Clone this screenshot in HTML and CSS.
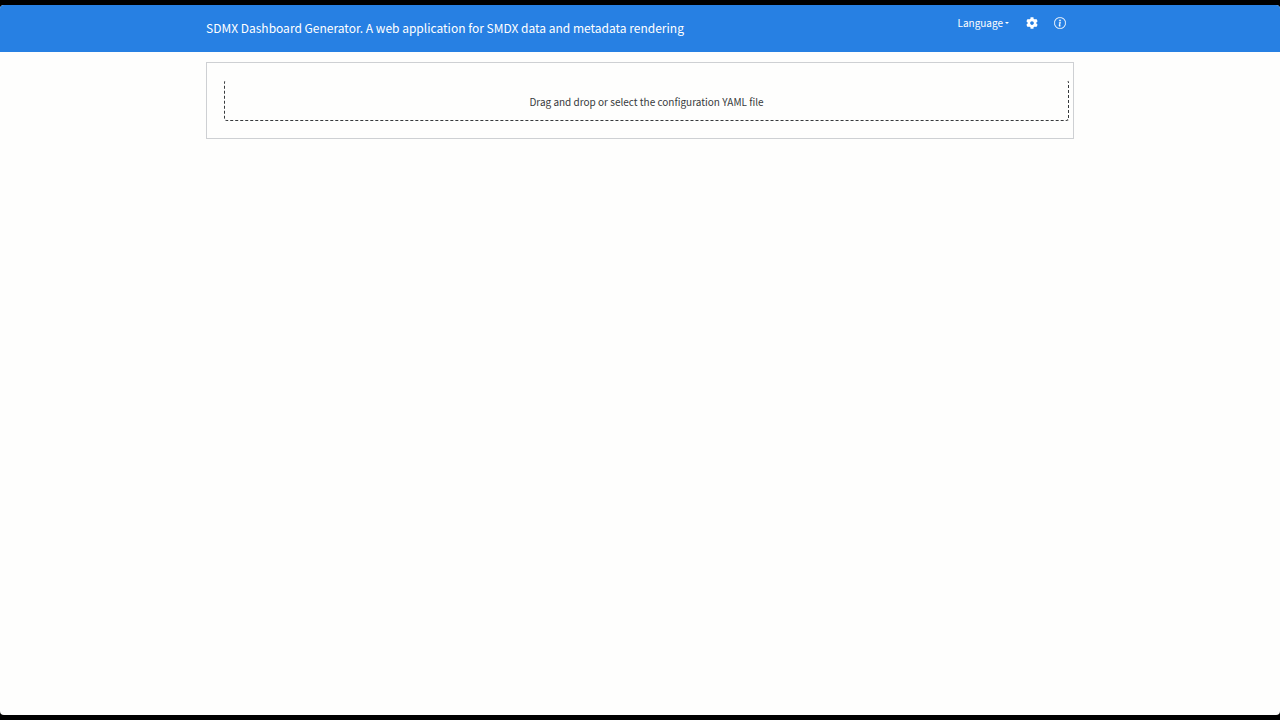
FILE: index.html
```html
<!DOCTYPE html>
<html lang="en">
<head>
<meta charset="utf-8">
<meta name="viewport" content="width=device-width, initial-scale=1">
<title>SDMX Dashboard Generator</title>
<link rel="stylesheet" href="styles.css">
</head>
<body>
<div class="window">
  <header class="navbar">
    <div class="container navbar-inner">
      <h1 class="brand">SDMX Dashboard Generator. A web application for SMDX data and metadata rendering</h1>
      <nav class="menu" aria-label="Main">
        <button type="button" class="menu-item language" aria-haspopup="true">Language<span class="caret"></span></button>
        <button type="button" class="menu-item" aria-label="Settings">
          <svg class="icon" viewBox="0 0 512 512" aria-hidden="true"><path fill="currentColor" d="M487.4 315.7l-42.6-24.6c4.3-23.2 4.3-47 0-70.2l42.6-24.6c4.9-2.8 7.1-8.6 5.5-14-11.1-35.6-30-67.8-54.7-94.6-3.8-4.1-10-5.1-14.8-2.3L380.8 110c-17.9-15.4-38.5-27.3-60.8-35.1V25.8c0-5.6-3.9-10.5-9.4-11.7-36.7-8.2-74.3-7.8-109.2 0-5.5 1.2-9.4 6.1-9.4 11.7V75c-22.2 7.9-42.8 19.8-60.8 35.1L88.700 85.500c-4.900-2.800-11-1.900-14.800 2.300-24.700 26.700-43.600 58.900-54.700 94.600-1.700 5.400.6 11.200 5.500 14L67.300 221c-4.300 23.200-4.300 47 0 70.200l-42.600 24.600c-4.900 2.800-7.100 8.600-5.500 14 11.100 35.600 30 67.800 54.700 94.600 3.800 4.100 10 5.100 14.800 2.300l42.600-24.600c17.900 15.400 38.500 27.300 60.800 35.100v49.200c0 5.600 3.900 10.500 9.400 11.700 36.700 8.200 74.300 7.800 109.200 0 5.500-1.200 9.400-6.100 9.400-11.700v-49.200c22.200-7.900 42.800-19.800 60.800-35.100l42.600 24.600c4.900 2.800 11 1.900 14.800-2.300 24.700-26.700 43.600-58.900 54.700-94.600 1.500-5.500-.7-11.300-5.600-14.100zM256 336c-44.100 0-80-35.900-80-80s35.900-80 80-80 80 35.900 80 80-35.900 80-80 80z"/></svg>
        </button>
        <button type="button" class="menu-item" aria-label="Information">
          <svg class="icon" viewBox="0 0 16 16" aria-hidden="true"><g fill="currentColor" stroke="currentColor" stroke-width="0.4"><path d="M8 15A7 7 0 1 1 8 1a7 7 0 0 1 0 14m0 .8A7.800 7.800 0 1 0 8 .2a7.800 7.800 0 0 0 0 15.600"/><path d="m8.930 6.588-2.290.287-.082.380.450.083c.294.070.352.176.288.469l-.738 3.468c-.194.897.105 1.319.808 1.319.545 0 1.178-.252 1.465-.598l.088-.416c-.200.176-.492.246-.686.246-.275 0-.375-.193-.304-.533zM9 4.500a1 1 0 1 1-2 0 1 1 0 0 1 2 0"/></g></svg>
        </button>
      </nav>
    </div>
  </header>
  <main class="container panel">
    <button type="button" class="dropzone">Drag and drop or select the configuration YAML file</button>
  </main>
</div>
</body>
</html>
```
FILE: styles.css
```css
* {
  box-sizing: border-box;
}

body {
  margin: 0;
  min-height: 100vh;
  padding: 5px 0;
  display: flex;
  background: #000;
  color: #373a3c;
  font-family: "Noto Sans CJK SC", "Noto Sans", sans-serif;
}

.window {
  flex: 1;
  background: #fefefd;
  border-radius: 4px;
  overflow: hidden;
}

.container {
  width: calc(100% - 32px);
  max-width: 868px;
  margin: 0 auto;
}

.navbar {
  background: #2780e3;
  color: #fff;
}

.navbar-inner {
  display: flex;
  justify-content: space-between;
  align-items: flex-start;
  padding: 12px 8px 13px 0;
}

.brand {
  margin: 0;
  font-size: 12px;
  font-weight: 400;
  line-height: 22px;
}

.menu {
  display: flex;
  align-items: center;
  gap: 16px;
}

.menu-item {
  display: flex;
  align-items: center;
  padding: 0;
  border: 0;
  background: none;
  color: inherit;
  font: inherit;
  font-size: 10px;
  line-height: 12px;
  cursor: pointer;
}

.language {
  margin-right: 1px;
}

.caret {
  margin-left: 2px;
  border: 2px solid transparent;
  border-top-color: currentColor;
  border-bottom: 0;
}

.icon {
  display: block;
  width: 12px;
  height: 12px;
}

.panel {
  margin-top: 10px;
  padding: 17px 4px 17px 17px;
  border: 1px solid #ced0d3;
}

.dropzone {
  display: block;
  width: 100%;
  padding: 3px 0 0;
  border: 1px dashed #373a3c;
  border-top-color: transparent;
  border-radius: 3px;
  background: none;
  color: inherit;
  font: inherit;
  font-size: 10px;
  line-height: 36px;
  text-align: center;
  cursor: pointer;
}
```
